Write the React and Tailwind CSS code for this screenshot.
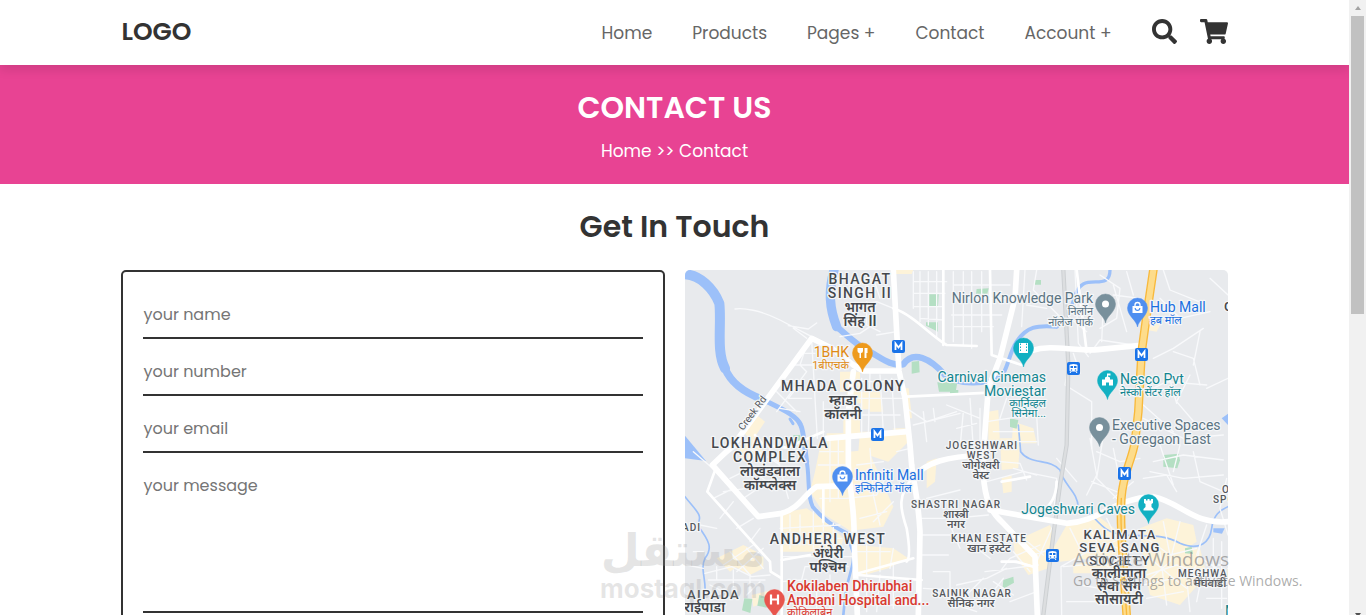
import React from "react";
import { FaSearch, FaShoppingCart } from "react-icons/fa";

const NAV = ["Home", "Products", "Pages +", "Contact", "Account +"];

const COMMERCIAL = [
  "M640 15h60l-5 12h-55z",
  "M480 320h60v60h-60z M500 380h100l10 60h-40v-25h-70z M545 415h60v18h-60z M490 440h50v70h-50z",
  "M670 370h16l10 90h-20z M440 505h50v35h-50z M640 490h50v14h-50z",
  "M190 500l40-50 25 20-40 60z M170 550l50-30 30 40-60 30z",
  "M425 520h75l10 150 5 130-80-50-45-70 15-60z",
  "M505 560l60-5 75 170-30 60-80 10z",
  "M540 500h140l5 30-60 60-90-30z",
  "M300 745l80-15 60 40 50 50-10 40h-180z",
  "M530 840l110 10 45 30-60 30-90 25z",
  "M110 880l80-40 40 20-80 60z M155 900l40-35 55 10 0 35-40 20z",
  "M740 590l30-10-5 70-25 20z",
  "M925 440l30-5 5 100-35 5z M1000 470l60 20 10 45-75 0z",
  "M960 520h60l-5 90-50 5z M965 640l30-10 0 50-25 5z",
  "M1000 830l110-50 15 40-20 90-60 20-40-60z",
  "M1160 780l90-30 80 60-20 60-170 20-20-40z",
  "M1380 790l80-30 80 20 10 50-90 60-70 0z",
  "M1390 900l80-50 90 0 20 80-80 90-90-30z",
  "M1180 900l90-20 40 20-60 25-70 0z",
  "M1400 170l40 10-10 20-30-5z",
  "M215 990l60-15 0 30-55 20z",
];

const PARKS = [
  "M748 88h28l-2 36h-26z",
  "M738 172h36v28l-36-18z",
  "M695 290l22-2 2 34-24 4z",
  "M772 352h60l-5 28h-50z",
  "M890 72l36-2-4 16h-34z",
  "M1065 45h18v14h-18z",
  "M990 460l25 5-5 26-20-5z",
  "M1450 570l46-4 4 20-8 24-42-5z",
  "M970 945l30-10 2 18-28 16-6-4z",
  "M1515 850l20-5 4 22-24-2z",
  "M193 1000l24 2-6 42-25-8z M238 990l26 8-4 30-28-6z",
  "M810 375h25v14h-25z",
  "M340 510l20 0 5 30-25-10z",
];

const MINOR_ROADS = [
  "M165 132C190 128 240 135 300 165L395 215M325 182l60 10 25-18M340 190l40 30",
  "M395 225L412 520M430 410V520M380 240l-20 60 20 20-90 120M355 265h50M340 300h65M320 350h45l-40 50h70M290 380l60 60M300 430l60 10",
  "M500 130l90-20 50 20M520 60l60-20 20 60M560 110v70l40 20M480 215l60-10 30-20M590 210l60-10M500 40h-40",
  "M700 20v110M720 20v150M745 20v160M770 20v195M700 50h100M700 85h95M700 125h90M720 160l70 5M820 20v210M850 20v220M875 20v230M905 20v180M820 60h170M825 100h160M815 150h150M820 185h120",
  "M570 320l-5 190M600 330l10 170M490 350h170M490 400h180M500 450h160M545 340v170M635 340l10 165M680 430l60 40 90-30M700 480l140-35M730 440l10 90M760 430l5 40M650 560l40-10",
  "M800 420l100 40M830 490l60-15M850 440l-10 110M870 400l10 150M900 430v120M920 470l130-20M940 500h120M930 530h140M1010 410l60 40 5 90M980 400l-20 60",
  "M1035 15l-10 170M1070 15l-10 60 80 80M1040 120l60 10M1185 15l10 220 30 40M1160 150l60 50M1165 300l-10 60 80 50v140M1180 265l20 60M1230 265l30-40 100 15M1260 30l60 40-10 90-50 30M1300 90l80 10M1340 20l20 70M1270 120l-5 110M1300 60l40 140",
  "M1450 15l20 60 100 40M1440 100l60 60 90-20M1420 280l60-30 90-60M1480 260l60 20 20 80M1400 380l60-30 120 10M1390 420l90 80M1470 345l20 70M1590 40l54 50M1530 330l-40 80 60 70M1560 200l-20 100M1580 370l64-30M1390 460l120 60 120-10",
  "M1230 520l20 110-30 60M1250 560l70 30 60-10M1270 510l-20 130 60 60M1300 550l20 100M1235 650l100 40M1420 590l90-20 120 15M1410 620l100 20 120-10M1390 640l70-10 30 50M1440 540l20 60 20 60M1500 540l-20 80M1540 560l20 90 70 30M1360 650l-60 50",
  "M1130 650v-10l-100-20-110 30M1128 650l-8 130-50 110M960 590l60 5 20 50M1000 610l70 20M1130 580l60 70",
  "M815 760l110-10M720 810h130M850 820l80 60M810 780l30 70M740 700l100-25M725 760h70M725 870h80M730 970l80 5M600 1020h110M760 920l50 0v100",
  "M1080 840l-90 40-30 40M1060 870l60-20M1030 820l60 50M990 890l60 10M1000 860l50 60M1075 900l-80 10-80 10",
  "M1145 1050l-2-145 70-40 100-40M1150 905l120-10 40 30M1230 790l50 100M1280 760l30 60M1330 800l-20 90M1290 840l50 20M1170 790l30 60M1200 960l60 10M1160 1010h120",
  "M1400 820l70 50 80-20M1450 770l20 100M1500 770l-30 120-70 60M1560 840l-10 60-30 40 10 100M1410 880l70 60M1400 930l90-30 60 20M1440 860l20 160M1390 960l90-20 40 30M1400 1000l110-20",
  "M305 950l60-5 10-40h130M305 820h180M330 750v100M360 750v90M300 790l180-10M400 740v110M430 760v100M460 775v70M305 875h220M530 860h100M560 840v90M600 840v80M640 850l-10 60",
  "M500 700l90-10 20-40M520 640h110M530 600l80-10M570 550l10 140M540 760l80-20M580 690l20 90M640 710l-60 60M420 560h70M415 600h80M420 700h90M450 520v190M475 520v180",
  "M110 590l80-60 110 70M205 550l90 40 30 110M250 520l60 100M150 640l60-30 50 40M190 700l90-60M130 680l70-10M100 700l60-30M120 760l40-50M170 790l50-30M210 830l30-40",
  "M75 925l80-20 60 30 55-5M85 945h170M130 900l90-60M170 920l80-70M110 905v40M160 915v50M210 930v50M40 860h30M20 900l50 10M90 960l80 40M40 560l70 60",
  "M60 780l50 10M200 850l50 60M150 860l60 70M240 950l-40 40M310 1010h100M410 960v80M450 930v110M560 940v100M600 930l-10 110M640 900v130",
  "M830 960l90-20 60-30M850 1000l60-60M990 1010l80-30M900 1030l70-90M940 950l60 40M830 1020l60 20",
  "M1640 640l-20 90 24 80M1580 780l-30 90 60 40M1600 820v120M1625 830v200M1580 900h64M1590 950h54M1580 1000h60M1570 910l-20 100",
];

const CONNECTORS = [
  "M640 130C700 150 750 210 800 240L890 243",
  "M790 15V240",
  "M930 15L935 270 1025 300",
  "M1190 15L1220 260",
  "M680 395L930 383",
  "M305 745V1050",
  "M108 608L82 680 270 890 272 920 305 940",
  "M225 510L250 540 320 548 430 500",
  "M430 670V770",
  "M305 885L390 870",
  "M535 925L700 880",
  "M725 945L535 930",
  "M705 630C650 690 660 730 680 790 690 850 690 880 680 890",
  "M1080 755C1090 730 1128 720 1130 650",
  "M965 650L1050 635",
  "M965 890H1010L1060 905",
];

const MAIN_ROADS = [
  "M160 540L395 220 455 250 520 300 550 318H655",
  "M160 540L97 600 235 755 305 745C360 730 370 690 410 665L510 662",
  "M640 15L650 200 657 318 675 400 690 540 695 600",
  "M695 600C700 650 715 700 720 800L715 1050",
  "M520 320L505 440V600C510 680 525 740 522 820L532 1050",
  "M440 520L680 500",
  "M1010 15L1005 100 960 280 925 370 912 540 910 630C915 700 930 740 970 775L1065 875 1072 1050",
  "M1055 257C1120 235 1180 262 1260 253L1390 240",
  "M930 735L1160 775C1260 770 1300 700 1420 695 1500 710 1540 780 1644 770",
  "M695 640C740 590 800 575 910 570",
];

const HIGHWAY =
  "M1420 15L1400 150 1385 260 1375 440 1365 530C1355 590 1330 620 1324 700 1320 760 1325 830 1340 1050";
const RAIL = "M1150 15L1165 300 1160 540 1140 660 1120 810 1090 1050";

function MapBase() {
  return (
    <g transform="translate(-5 -5) scale(0.33333)" fill="none" strokeLinecap="round" strokeLinejoin="round">
      <g fill="#fdf3d9">
        {COMMERCIAL.map((d) => <path key={d} d={d} />)}
      </g>
      <g fill="#b4dfc3">
        {PARKS.map((d) => <path key={d} d={d} />)}
      </g>
      <g stroke="#9cc0f9">
        <path strokeWidth="30" d="M15 28C60 30 100 70 118 115 125 180 108 260 135 310" />
        <path strokeWidth="23" d="M135 310C155 360 200 385 245 402" />
        <path strokeWidth="15" d="M245 402C300 430 350 450 362 480 372 500 372 540 380 590" />
        <path strokeWidth="12" d="M380 590C390 640 380 690 398 725 430 765 470 790 500 805L520 860" />
        <path strokeWidth="8" d="M520 860C525 900 500 940 495 1000L490 1050" />
        <path strokeWidth="28" d="M462 15C445 80 448 130 470 185" />
        <path strokeWidth="19" d="M470 185C500 210 530 240 560 255 600 275 630 305 670 298 700 255 750 280 795 330" />
        <path strokeWidth="12" d="M795 330C830 365 930 365 970 325 985 300 990 260 1010 230 1040 185 1070 180 1130 185" />
        <path strokeWidth="10" d="M1130 185C1185 160 1170 80 1210 57 1240 40 1290 70 1290 15" />
        <path strokeWidth="5" d="M15 695C50 740 70 750 52 780 90 830 98 850 75 880 60 910 78 940 75 980" />
        <path strokeWidth="5" d="M1015 480L1022 560C1050 600 1110 580 1140 615 1150 660 1195 680 1195 730 1250 740 1250 800 1330 810 1400 815 1450 805 1500 835 1560 860 1590 830 1595 790 1600 750 1620 735 1644 725" />
        <path strokeWidth="9" d="M330 462l9 14" />
      </g>
      <g fill="#9cc0f9">
        <path d="M15 512L78 588 15 580z" />
        <path d="M1625 460l19-14v34z" />
        <path d="M1600 790l34 0-8 16-26-4z" />
      </g>
      <g stroke="#f8f9fb" strokeWidth="4">
        {MINOR_ROADS.map((d) => <path key={d} d={d} />)}
      </g>
      <path d={RAIL} stroke="#cdd0d3" strokeWidth="13" />
      <path d={RAIL} stroke="#dcdee0" strokeWidth="7" />
      <g stroke="#ffffff" strokeWidth="8">
        {CONNECTORS.map((d) => <path key={d} d={d} />)}
      </g>
      <g stroke="#ffffff" strokeWidth="17">
        {MAIN_ROADS.map((d) => <path key={d} d={d} />)}
      </g>
      <path d={HIGHWAY} stroke="#f8b93c" strokeWidth="26" />
      <path d={HIGHWAY} stroke="#fddc8b" strokeWidth="18" />
      <path d="M1340 1050C1325 830 1320 760 1324 700" stroke="#f8b93c" strokeWidth="4" />
    </g>
  );
}

/* Place markers: position is the middle of the head. */
function Pin({ x, y, color, children }) {
  return (
    <g transform={`translate(${x} ${y})`}>
      <path d="M0 19C-1 12 -10 8 -10 0A10 10 0 0 1 10 0C10 8 1 12 0 19z" fill={color} stroke={color} strokeWidth="0.5" />
      {children}
    </g>
  );
}

const Bag = () => (
  <g>
    <path d="M-5 -2h10v7h-10z" fill="#fff" />
    <path d="M-2.5 -2v-1a2.5 2.5 0 0 1 5 0v1" fill="none" stroke="#fff" strokeWidth="1.3" />
    <path d="M-2.3 0a2.3 2.3 0 0 0 4.6 0" fill="none" stroke="#4f8ff0" strokeWidth="1.2" />
  </g>
);

function Metro({ x, y }) {
  return (
    <g transform={`translate(${x} ${y})`}>
      <rect x="-6.5" y="-6.5" width="13" height="13" rx="2" fill="#1a73e8" />
      <path d="M-3 3.5V-3L0 1 3 -3V3.5" fill="none" stroke="#fff" strokeWidth="1.8" />
    </g>
  );
}

function Train({ x, y }) {
  return (
    <g transform={`translate(${x} ${y})`}>
      <rect x="-6.5" y="-6.5" width="13" height="13" rx="2" fill="#1a73e8" />
      <path d="M-4 -3q0-1.5 4-1.5t4 1.5v5q0 1-1 1h-6q-1 0-1-1z" fill="#fff" />
      <path d="M-3 -2.5h2.500v2h-2.500zM.5 -2.500h2.500v2h-2.500z" fill="#1a73e8" />
      <circle cx="-2" cy="1.5" r=".8" fill="#1a73e8" />
      <circle cx="2" cy="1.5" r=".8" fill="#1a73e8" />
      <path d="M-2.5 3l-1 1.5M2.5 3l1 1.5" stroke="#fff" />
    </g>
  );
}

/* [x, first baseline, line step, anchor, style, lines] */
const LABELS = [
  [860, 284, 14, "middle", "area", ["BHAGAT", "SINGH II"]],
  [860, 312, 14, "middle", "areaLocal", ["भागत", "सिंह II"]],
  [843, 391, 14, "middle", "area", ["MHADA COLONY"]],
  [843, 405, 14, "middle", "areaLocal", ["म्हाडा", "कॉलनी"]],
  [770, 448, 14, "middle", "area", ["LOKHANDWALA", "COMPLEX"]],
  [770, 476, 14, "middle", "areaLocal", ["लोखंडवाला", "कॉम्प्लेक्स"]],
  [828, 544, 14, "middle", "area", ["ANDHERI WEST"]],
  [828, 558, 14, "middle", "areaLocal", ["अंधेरी", "पश्चिम"]],
  [982, 449, 10, "middle", "small", ["JOGESHWARI", "WEST"]],
  [981, 469, 10, "middle", "smallLocal", ["जोगेश्वरी", "वेस्ट"]],
  [956, 508, 10, "middle", "small", ["SHASTRI NAGAR"]],
  [956, 518, 10, "middle", "smallLocal", ["शास्त्री", "नगर"]],
  [989, 542, 10, "middle", "small", ["KHAN ESTATE"]],
  [989, 552, 10, "middle", "smallLocal", ["खान इस्टेट"]],
  [972, 597, 10, "middle", "small", ["SAINIK NAGAR"]],
  [971, 607, 10, "middle", "smallLocal", ["सैनिक नगर"]],
  [1120, 539, 13, "middle", "mid", ["KALIMATA", "SEVA SANG", "SOCIETY"]],
  [1119, 578, 13, "middle", "areaLocal", ["कालीमाता", "सेवा सँग", "सोसायटी"]],
  [1178, 577, 10, "start", "small", ["MEGHWADI"]],
  [1210, 587, 10, "middle", "smallLocal", ["मेघवाडी"]],
  [1213, 503, 10, "start", "small", ["SPORTS"]],
  [1222, 493, 10, "start", "small", ["OM"]],
  [1224, 311, 10, "start", "mid", ["G"]],
  [1225, 616, 10, "start", "teal", ["M"]],
  [682, 531, 10, "start", "small", ["ADI"]],
  [687, 599, 13, "start", "mid", ["AIPADA"]],
  [684, 612, 13, "start", "areaLocal", ["राईपाडा"]],
  [1093, 303, 12, "end", "slate", ["Nirlon Knowledge Park"]],
  [1093, 315, 11, "end", "slateLocal", ["निर्लोन", "नॉलेज पार्क"]],
  [1112, 430, 14, "start", "slate", ["Executive Spaces", "- Goregaon East"]],
  [1150, 312, 12, "start", "blue", ["Hub Mall"]],
  [1150, 324, 12, "start", "blueLocal", ["हब मॉल"]],
  [855, 480, 12, "start", "blue", ["Infiniti Mall"]],
  [855, 492, 12, "start", "blueLocal", ["इन्फिनिटी मॉल"]],
  [1046, 382, 14, "end", "teal", ["Carnival Cinemas", "Moviestar"]],
  [1046, 407, 10, "end", "tealLocal", ["कार्निव्हल", "सिनेमा..."]],
  [1120, 384, 12, "start", "teal", ["Nesco Pvt"]],
  [1120, 396, 12, "start", "tealLocal", ["नेस्को सेंटर हॉल"]],
  [1135, 514, 12, "end", "teal", ["Jogeshwari Caves"]],
  [849, 357, 12, "end", "orange", ["1BHK"]],
  [849, 369, 12, "end", "orangeLocal", ["1बीएचके"]],
  [787, 591, 14, "start", "red", ["Kokilaben Dhirubhai", "Ambani Hospital and..."]],
  [787, 616, 12, "start", "redLocal", ["कोकिलाबेन"]],
];

const LABEL_STYLES = {
  area: "text-[14px] font-medium tracking-widest fill-[#45484c]",
  areaLocal: "text-[14px] font-semibold fill-[#45484c]",
  mid: "text-[13px] font-medium tracking-widest fill-[#45484c]",
  small: "text-[10px] font-medium tracking-widest fill-[#55585c]",
  smallLocal: "text-[11px] font-semibold fill-[#55585c]",
  slate: "text-[14px] fill-[#5b7482]",
  slateLocal: "text-[11px] fill-[#5b7482]",
  blue: "text-[14px] fill-[#1a6fe0]",
  blueLocal: "text-[11px] fill-[#1a6fe0]",
  teal: "text-[14px] fill-[#12858f]",
  tealLocal: "text-[11px] fill-[#12858f]",
  orange: "text-[14px] fill-[#e08a14]",
  orangeLocal: "text-[11px] fill-[#e08a14]",
  red: "text-[14px] font-medium fill-[#d93a30]",
  redLocal: "text-[11px] fill-[#d93a30]",
};

function AreaMap() {
  return (
    <svg
      role="img"
      aria-label="Map of Jogeshwari and Andheri West"
      className="h-full w-full rounded-[5px] bg-[#e8eaed] font-['Roboto','Noto_Sans',sans-serif]"
    >
      <MapBase />
      <g transform="translate(-685 -270)">
        <Metro x={898.5} y={346.5} />
        <Metro x={877.5} y={434.5} />
        <Metro x={1141.5} y={354.5} />
        <Metro x={1124.5} y={473.5} />
        <Train x={1073.5} y={368.5} />
        <Train x={1052.5} y={555.5} />
        <Pin x={862.5} y={353} color="#ee9a1c">
          <path d="M-5 -5v3q0 2 2 2v5h1.500v-5q2 0 2-2v-3zM2 -5v10h2v-5h1v-5z" fill="#fff" />
        </Pin>
        <Pin x={1105.5} y={304} color="#78909c"><circle r="3.5" fill="#fff" /></Pin>
        <Pin x={1099.5} y={427.5} color="#78909c"><circle r="3.5" fill="#fff" /></Pin>
        <Pin x={1137.5} y={308} color="#4f8ff0"><Bag /></Pin>
        <Pin x={842.5} y={476.5} color="#4f8ff0"><Bag /></Pin>
        <Pin x={1023.5} y={348} color="#12b0c2">
          <path d="M-4.5 -5h9v10h-9z" fill="#fff" />
          <path d="M-3 -4.5v9M3 -4.5v9" stroke="#12b0c2" strokeDasharray="1.5 1.5" />
        </Pin>
        <Pin x={1107.5} y={380.5} color="#12b0c2">
          <path d="M-5.5 5v-6h3v-2l2-1v-3h3.500v2h-2.500v1l2 1v2h3v6h-4v-3h-3v3z" fill="#fff" />
        </Pin>
        <Pin x={1148.5} y={504.5} color="#12b0c2">
          <path d="M-4.5 -5.500h2v1.500h1.500v-1.500h2v1.500h1.500v-1.500h2v4l-1.500 1v3l2 2v1.500h-10v-1.500l2-2v-3l-1.500-1z" fill="#fff" />
        </Pin>
        <Pin x={774.5} y={599.5} color="#e8554d">
          <path d="M-3.5 -5v10M3.5 -5v10M-3.5 0h7" stroke="#fff" strokeWidth="2.2" />
        </Pin>
        <g stroke="#f4f6f8" strokeWidth="2.5" strokeLinejoin="round" className="[paint-order:stroke]">
          {LABELS.map(([x, y, step, anchor, style, lines]) => (
            <text key={lines[0]} textAnchor={anchor} className={LABEL_STYLES[style]}>
              {lines.map((line, i) => (
                <tspan key={line} x={x} y={y + i * step}>{line}</tspan>
              ))}
            </text>
          ))}
          <text transform="translate(743 431) rotate(-53)" className="fill-[#55585c] text-[10px]">Creek Rd</text>
        </g>
      </g>
    </svg>
  );
}

const FIELDS = [
  { id: "name", type: "text" },
  { id: "number", type: "tel" },
  { id: "email", type: "email" },
];

function ContactForm() {
  return (
    <form className="flex flex-col gap-[9px] rounded-[5px] border-2 border-[#333] px-5 pt-[19px] pb-5">
      {FIELDS.map(({ id, type }) => (
        <input
          key={id}
          type={type}
          aria-label={`your ${id}`}
          placeholder={`your ${id}`}
          className="h-12 w-full border-b-2 border-[#333] text-base outline-none placeholder:text-[#757575]"
        />
      ))}
      <textarea
        aria-label="your message"
        placeholder="your message"
        className="h-[151px] w-full resize-none border-b-2 border-[#333] pt-3 text-base leading-6 outline-none placeholder:text-[#757575]"
      />
      <button type="submit" className="mt-2 h-11 self-start rounded-[5px] bg-[#333] px-8 text-[17px] text-white">
        send message
      </button>
    </form>
  );
}

function ScrollTrack() {
  return (
    <div aria-hidden="true" className="flex w-[17px] shrink-0 flex-col items-center bg-[#f1f1f1]">
      <svg className="h-4 w-4 shrink-0" viewBox="0 0 16 16"><path d="M8 6l3 4H5z" fill="#a3a3a3" /></svg>
      <div className="h-[298px] w-[13px] bg-[#c1c1c1]" />
      <svg className="-mb-2 mt-auto h-4 w-4 shrink-0" viewBox="0 0 16 16"><path d="M5 6h6l-3 4z" fill="#505050" /></svg>
    </div>
  );
}

export default function App() {
  return (
    <div className="relative flex h-screen overflow-hidden bg-white font-['Poppins','Inter',sans-serif] text-[#333]">
      <div className="min-w-0 flex-1 overflow-y-auto [scrollbar-width:none]">
        <header className="relative flex h-[65px] items-center justify-between bg-white px-[9%] pb-0.5 shadow-[0_5px_10px_rgba(0,0,0,0.1)]">
          <a href="#" className="text-[25px] leading-9 font-semibold">LOGO</a>
          <div className="flex items-center gap-10">
            <nav className="flex gap-10 pt-0.5 text-[17px] leading-[26px] text-[#666]">
              {NAV.map((item) => <a key={item} href="#">{item}</a>)}
            </nav>
            <div className="flex gap-[23px] text-[25px]">
              <button type="button" aria-label="Search"><FaSearch /></button>
              <a href="#" aria-label="Cart"><FaShoppingCart className="h-[25px] w-7" /></a>
            </div>
          </div>
        </header>

        <section className="bg-[#e84393] py-5 text-center text-white">
          <h1 className="text-[30px] leading-[45px] font-semibold">CONTACT US</h1>
          <p className="mt-2 text-[17px] leading-[26px]">
            <a href="#">Home</a> &gt;&gt; Contact
          </p>
        </section>

        <main className="px-[9%] pt-5 pb-10">
          <h2 className="mb-[21px] text-center text-[30px] leading-[45px] font-semibold">Get In Touch</h2>
          <div className="grid grid-cols-2 gap-5">
            <ContactForm />
            <AreaMap />
          </div>
        </main>
      </div>

      <ScrollTrack />

      <div className="pointer-events-none absolute bottom-3 left-1/2 -translate-x-1/2 text-center font-bold text-[#999]/25">
        <p lang="ar" dir="rtl" className="font-['DejaVu_Sans',sans-serif] text-[45px] leading-[48px]">مستقل</p>
        <p className="font-['Inter',sans-serif] text-[26px] leading-7">mostaql.com</p>
      </div>

      <div className="pointer-events-none absolute right-[57px] bottom-6 w-[236px] font-['Open_Sans',sans-serif] whitespace-nowrap text-[#888]/70">
        <p className="text-[19px] leading-6">Activate Windows</p>
        <p className="text-[14px] leading-5">Go to Settings to activate Windows.</p>
      </div>
    </div>
  );
}
